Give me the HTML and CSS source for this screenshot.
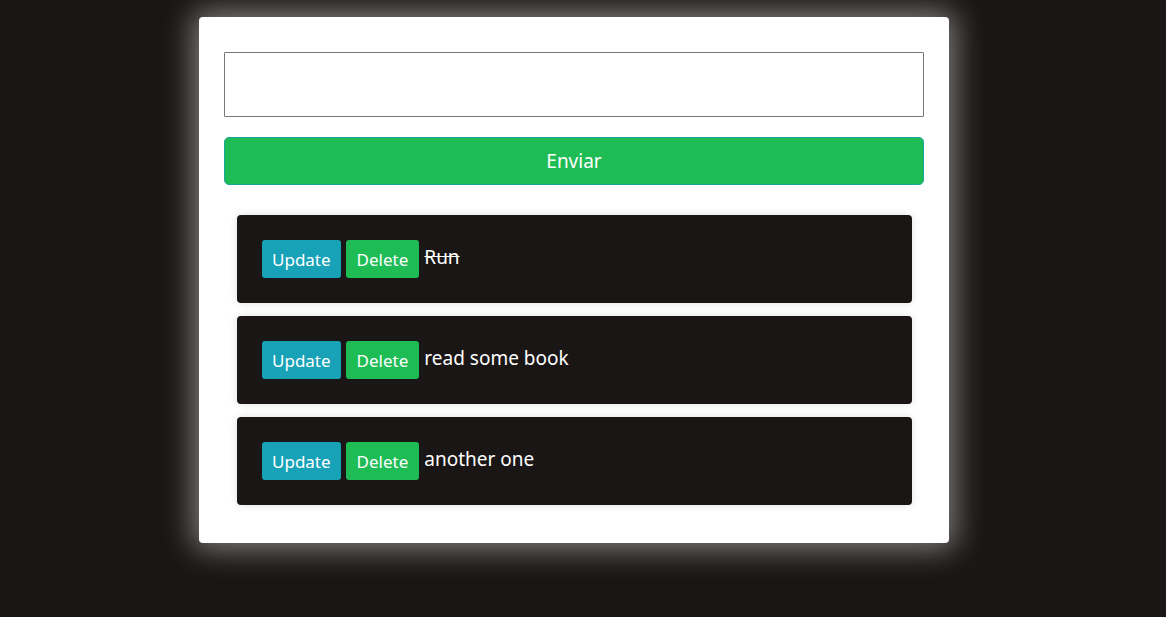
FILE: index.html
```html
<!DOCTYPE html>
<html>
<head>
<meta charset="utf-8">
<link rel="stylesheet" href="styles.css">
</head>
<body>
<main class="card">
  <input class="task-input" type="text">
  <button class="send">Enviar</button>
  <ul class="list">
    <li class="item">
      <button class="btn btn-update">Update</button>
      <button class="btn btn-delete">Delete</button>
      <span class="label done">Run</span>
    </li>
    <li class="item">
      <button class="btn btn-update">Update</button>
      <button class="btn btn-delete">Delete</button>
      <span class="label">read some book</span>
    </li>
    <li class="item">
      <button class="btn btn-update">Update</button>
      <button class="btn btn-delete">Delete</button>
      <span class="label">another one</span>
    </li>
  </ul>
</main>
</body>
</html>
```

FILE: styles.css
```css
html, body {
  margin: 0;
  padding: 0;
  background: #1a1615;
  height: 100%;
}
body {
  font-family: "Noto Sans", "Open Sans", sans-serif;
  padding-top: 17px;
}
.card {
  box-sizing: border-box;
  width: 750px;
  height: 526px;
  margin: 0 auto 0 199px;
  background: #fff;
  border-radius: 4px;
  padding: 35px 25px 0 25px;
  box-shadow: 0 0 30px 6px rgba(255, 255, 255, 0.45);
  display: flex;
  flex-direction: column;
}
.task-input {
  box-sizing: border-box;
  width: 700px;
  height: 65px;
  border: 1px solid #767676;
  border-radius: 1px;
  margin: 0;
  padding: 0 10px;
  font-size: 18px;
}
.send {
  box-sizing: border-box;
  margin-top: 20px;
  width: 700px;
  height: 48px;
  background: #1ebc55;
  border: 1px solid #1aa59a;
  border-radius: 5px;
  color: #fff;
  font-family: inherit;
  font-size: 19px;
  padding: 1px 0 0 0;
  line-height: 1;
}
.list {
  list-style: none;
  margin: 30px 12px 0 13px;
  padding: 0;
  display: flex;
  flex-direction: column;
  gap: 13px;
}
.item {
  box-sizing: border-box;
  height: 88px;
  background: #1a1615;
  border-radius: 4px;
  padding: 25px;
  display: flex;
  align-items: center;
  gap: 5px;
  box-shadow: 0 0 8px rgba(0, 0, 0, 0.12);
}
.btn {
  height: 38px;
  border: none;
  border-radius: 3px;
  color: #fff;
  font-family: inherit;
  font-size: 17px;
  padding: 1px 10px 0 10px;
  margin: 0;
  line-height: 37px;
}
.btn-update { background: #17a2b8; }
.btn-delete { background: #1ebc55; padding: 1px 11px 0 11px; }
.label {
  color: #fff;
  font-size: 19px;
  margin-top: -4px;
}
.done { text-decoration: line-through; }
```
